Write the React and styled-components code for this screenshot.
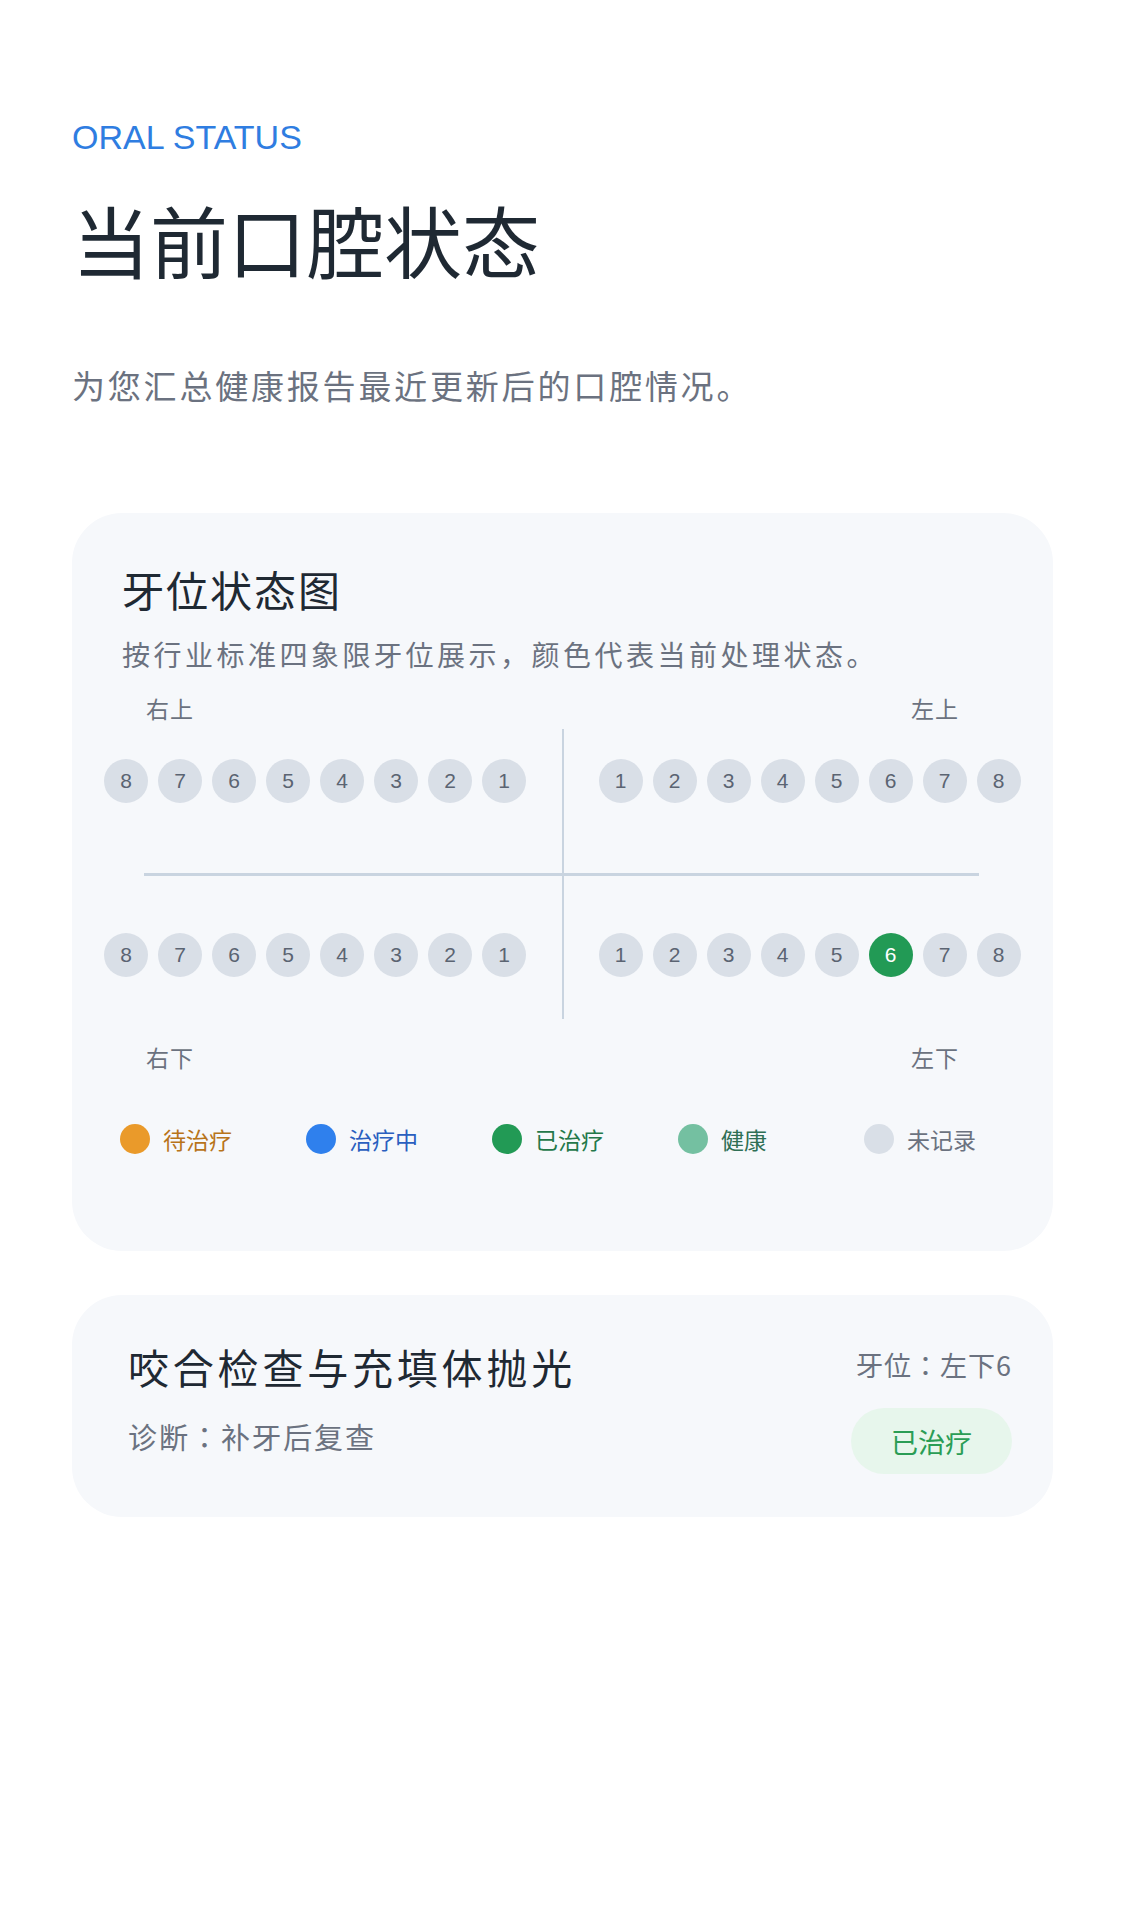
import React from "react";
import styled, { createGlobalStyle } from "styled-components";

//fonts and page reset
const GlobalStyle = createGlobalStyle`
    body {
        margin: 0;
        background: #ffffff;
        font-family: "Noto Sans CJK KR", "Noto Sans CJK SC", sans-serif;
        color: #1f2933;
    }
`;

// teeth data, per quadrant, in display order
const upperRight = [8, 7, 6, 5, 4, 3, 2, 1];
const upperLeft = [1, 2, 3, 4, 5, 6, 7, 8];
const lowerRight = [8, 7, 6, 5, 4, 3, 2, 1];
const lowerLeft = [1, 2, 3, 4, 5, 6, 7, 8];

const statusColors = {
    pending: { dot: "#ea9a2a", text: "#b8741a" },
    treating: { dot: "#2f80ed", text: "#2a5fbf" },
    treated: { dot: "#229a55", text: "#24784a" },
    healthy: { dot: "#74c0a1", text: "#2f6f55" },
    none: { dot: "#d9dfe7", text: "#6b7280" },
};

const legend = [
    { key: "pending", label: "待治疗" },
    { key: "treating", label: "治疗中" },
    { key: "treated", label: "已治疗" },
    { key: "healthy", label: "健康" },
    { key: "none", label: "未记录" },
];

const App = () => {
    // only lower left 6 has a record
    const getStatus = (quadrant, n) =>
        quadrant === "LL" && n === 6 ? "treated" : "none";

    const renderRow = (quadrant, teeth) => (
        <TeethRow>
            {teeth.map((n) => (
                <Tooth key={quadrant + n} status={getStatus(quadrant, n)}>
                    {n}
                </Tooth>
            ))}
        </TeethRow>
    );

    return (
        <>
            <GlobalStyle />
            <Page>
                <Eyebrow>ORAL STATUS</Eyebrow>
                <Title>当前口腔状态</Title>
                <Lead>为您汇总健康报告最近更新后的口腔情况。</Lead>

                <ChartCard>
                    <CardHead>
                        <CardTitle>牙位状态图</CardTitle>
                        <CardDesc>
                            按行业标准四象限牙位展示，颜色代表当前处理状态。
                        </CardDesc>
                    </CardHead>

                    <QuadLabels>
                        <span>右上</span>
                        <span>左上</span>
                    </QuadLabels>
                    <Quadrants>
                        {renderRow("UR", upperRight)}
                        {renderRow("UL", upperLeft)}
                        {renderRow("LR", lowerRight)}
                        {renderRow("LL", lowerLeft)}
                    </Quadrants>
                    <QuadLabels bottom>
                        <span>右下</span>
                        <span>左下</span>
                    </QuadLabels>

                    <Legend>
                        {legend.map((item) => (
                            <LegendItem key={item.key} status={item.key}>
                                <Dot status={item.key} />
                                {item.label}
                            </LegendItem>
                        ))}
                    </Legend>
                </ChartCard>

                <RecordCard>
                    <RecordMain>
                        <RecordTitle>咬合检查与充填体抛光</RecordTitle>
                        <RecordDiag>诊断：补牙后复查</RecordDiag>
                    </RecordMain>
                    <RecordSide>
                        <ToothPos>牙位：左下6</ToothPos>
                        <Badge>已治疗</Badge>
                    </RecordSide>
                </RecordCard>
            </Page>
        </>
    );
};

const Page = styled.div`
    padding: 117px 72px 120px;
`;

const Eyebrow = styled.div`
    font-family: "Liberation Sans", Arial, sans-serif;
    font-size: 34px;
    line-height: 40px;
    color: #2f7de1;
`;

const Title = styled.h1`
    margin: 35px 0 0;
    font-size: 78px;
    line-height: 94px;
    font-weight: 400;
    color: #1f2933;
`;

const Lead = styled.p`
    margin: 74px 0 0;
    font-size: 33px;
    line-height: 50px;
    letter-spacing: 2.8px;
    color: #6b7280;
`;

const Card = styled.section`
    background: #f6f8fb;
    border-radius: 50px;
`;

const ChartCard = styled(Card)`
    margin-top: 103px;
    padding: 48px 32px 97px;
`;

const CardHead = styled.div`
    padding-left: 18px;
`;

const CardTitle = styled.h2`
    margin: 0;
    font-size: 42px;
    line-height: 55px;
    font-weight: 400;
    letter-spacing: 2px;
    color: #1f2933;
`;

const CardDesc = styled.p`
    margin: 18px 0 0;
    font-size: 28px;
    line-height: 40px;
    letter-spacing: 3.5px;
    color: #6b7280;
`;

const QuadLabels = styled.div`
    display: flex;
    justify-content: space-between;
    margin-top: ${(p) => (p.bottom ? "22px" : "18px")};
    padding: 0 62px 0 42px;
    font-size: 23px;
    line-height: 32px;
    letter-spacing: 1px;
    color: #6b7280;
`;

const Quadrants = styled.div`
    position: relative;
    display: grid;
    grid-template-columns: 1fr 1fr;
    column-gap: 72px;
    row-gap: 130px;
    margin-top: 5px;
    padding: 30px 0 42px;

    /* vertical axis */
    &::before {
        content: "";
        position: absolute;
        top: 0;
        bottom: 0;
        left: 50%;
        width: 2px;
        margin-left: -1px;
        background: #c9d4e0;
    }
    /* horizontal axis */
    &::after {
        content: "";
        position: absolute;
        left: 40px;
        right: 42px;
        top: 144px;
        height: 3px;
        background: #c9d4e0;
    }
`;

const TeethRow = styled.div`
    display: flex;
    gap: 10px;
`;

const Tooth = styled.div`
    width: 44px;
    height: 44px;
    border-radius: 50%;
    display: flex;
    align-items: center;
    justify-content: center;
    font-family: "Liberation Sans", Arial, sans-serif;
    font-size: 21px;
    background: ${(p) => (p.status === "treated" ? "#229a55" : "#d9dfe7")};
    color: ${(p) => (p.status === "treated" ? "#ffffff" : "#5b6472")};
`;

const Legend = styled.div`
    display: grid;
    grid-template-columns: repeat(4, 186px) 1fr;
    margin-top: 51px;
    padding-left: 16px;
`;

const LegendItem = styled.div`
    display: flex;
    align-items: center;
    gap: 13px;
    font-size: 23px;
    line-height: 30px;
    color: ${(p) => statusColors[p.status].text};
`;

const Dot = styled.span`
    width: 30px;
    height: 30px;
    border-radius: 50%;
    flex-shrink: 0;
    background: ${(p) => statusColors[p.status].dot};
`;

const RecordCard = styled(Card)`
    margin-top: 44px;
    padding: 44px 41px 43px 56px;
    display: flex;
    justify-content: space-between;
    align-items: flex-start;
`;

const RecordMain = styled.div`
    display: flex;
    flex-direction: column;
    gap: 23px;
`;

const RecordTitle = styled.h3`
    margin: 0;
    font-size: 41px;
    line-height: 54px;
    font-weight: 400;
    letter-spacing: 3.8px;
    color: #1f2933;
`;

const RecordDiag = styled.div`
    font-size: 29px;
    line-height: 40px;
    letter-spacing: 2px;
    color: #6b7280;
`;

const RecordSide = styled.div`
    display: flex;
    flex-direction: column;
    align-items: flex-end;
    gap: 25px;
    padding-top: 8px;
`;

const ToothPos = styled.div`
    font-size: 27px;
    line-height: 36px;
    letter-spacing: 1px;
    color: #6b7280;
`;

const Badge = styled.div`
    width: 161px;
    height: 66px;
    border-radius: 33px;
    display: flex;
    align-items: center;
    justify-content: center;
    background: #e7f6ec;
    color: #2a9d55;
    font-size: 27px;
`;

export default App;
